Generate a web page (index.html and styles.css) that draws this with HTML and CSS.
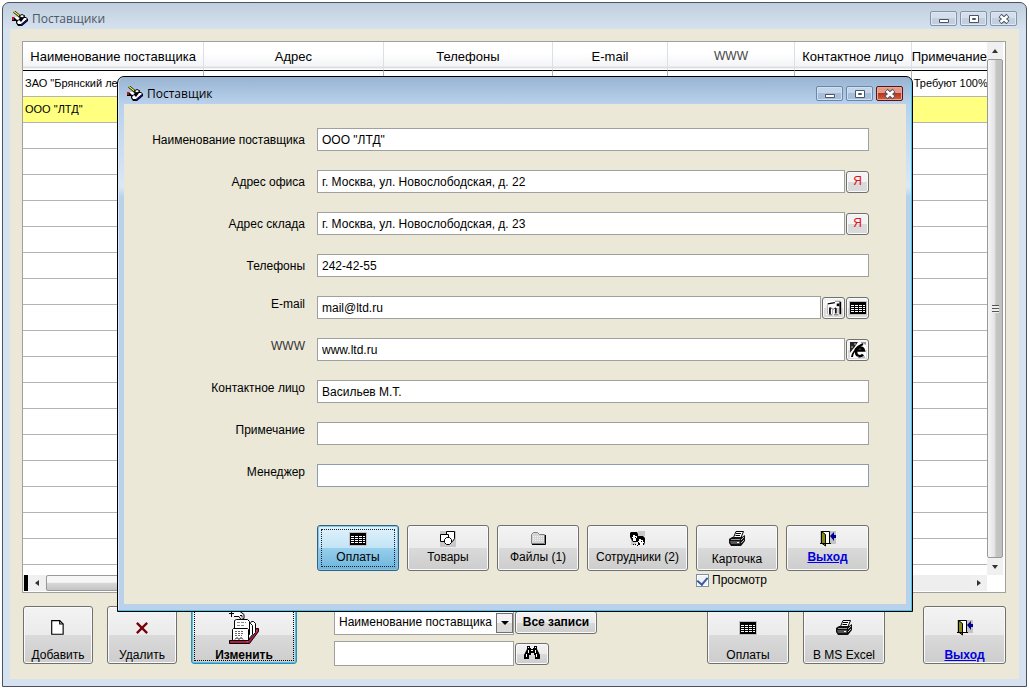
FILE: index.html
```html
<!DOCTYPE html>
<html lang="ru">
<head>
<meta charset="utf-8">
<title>Поставщики</title>
<link rel="stylesheet" href="styles.css">
</head>
<body>
<svg class="sprite" aria-hidden="true">
  <symbol id="i-app" viewBox="0 0 16 16">
    <path d="M0 6h3l3 3 3-3h5l2 2v2l-6 5H6l-2-3v-2H0z" fill="#000"/>
    <path d="M5 11l2-2 2 2 3-4h2l1 1-6 5H6z" fill="#fff"/>
    <path d="M0 6h2v3H0z" fill="#c01020"/>
    <path d="M2 6h4l1 2-2 1z" fill="#fff"/>
    <path d="M2 .500l7 6" stroke="#000" stroke-width="2.500"/>
    <path d="M2 .500l6 5" stroke="#f4ee30" stroke-width="1.300"/>
    <path d="M7 5l3-1.500 3 1.500-3 2z" fill="#fff" stroke="#000"/>
    <path d="M9 14l6-5" stroke="#10108a" stroke-width="1.300"/>
  </symbol>
  <symbol id="i-table" viewBox="0 0 18 14">
    <path d="M0 0h18v14H0z" fill="#c0c0c0"/><path d="M1 1h16v12H1z"/>
    <path d="M2 4h3v1H2zM6 4h3v1H6zM10 4h3v1h-3zM14 4h2v1h-2zM2 6h3v1H2zM6 6h3v1H6zM10 6h3v1h-3zM14 6h2v1h-2zM2 8h3v1H2zM6 8h3v1H6zM10 8h3v1h-3zM14 8h2v1h-2zM2 10h3v1H2zM6 10h3v1H6zM10 10h3v1h-3zM14 10h2v1h-2z" fill="#fff"/>
  </symbol>
  <symbol id="i-shapes" viewBox="0 0 16 16">
    <path d="M0 0h16v16H0z" fill="#c8c8c8"/>
    <path d="M6.500.500h8v7l-2 3h-6z" fill="#fff" stroke="#000"/>
    <path d="M.500 3.500h8v7h-8z" fill="#fff" stroke="#000"/>
    <path d="M6.500 6.500h3l2 2v3l-2 2h-3l-2-2v-3z" fill="#fff" stroke="#000"/>
  </symbol>
  <symbol id="i-folder" viewBox="0 0 16 16">
    <path d="M1.500 12.500v-9l2-2h4l2 2h5v9z" fill="#d4d4d4" stroke="#808080"/>
    <path d="M2 13.500h13.500V4" fill="none" stroke="#000"/>
    <path d="M3 5.500h11M3 7.500h11M3 9.500h11" stroke="#f4f4f4" stroke-dasharray="1 1"/>
  </symbol>
  <symbol id="i-people" viewBox="0 0 16 16">
    <path d="M8 0h7v5h-7zM1 9h5v5H1z" fill="#c8c8c8"/>
    <path d="M1 1h6l1 2v2h5l2 2v4l-1 3H8v-3H3L1 8 0 6V2z" fill="#000"/>
    <path d="M3 4h2v1h2v2H6v3H3V7H2V6h1z" fill="#fff"/>
    <path d="M9 8h2v1h2v2h1v1h-1v2h-3v-2H9v-1H8v-1h1z" fill="#fff"/>
    <path d="M5 6h1v1H5zM11 10h1v1h-1z"/>
    <path d="M3 13h1v1H3zM5 13h1v1H5zM7 14h1v1H7z"/>
  </symbol>
  <symbol id="i-printer" viewBox="0 0 18 16">
    <path d="M5.500 6.500L8 .500h7.500l-2.500 6z" fill="#fff" stroke="#000"/>
    <path d="M8 2.500h5M7.500 4.500h4.500" stroke="#000"/>
    <path d="M1 8l3-2h10l3-2v6l-4 5H3l-2-3z" fill="#111"/>
    <path d="M3 8h9v1H3z" fill="#999"/><path d="M2 10h10v3H3z" fill="#555"/>
    <path d="M13 9l3-3M13 12l3-3" stroke="#bbb"/>
    <path d="M9 11h2v1H9z" fill="#fff"/>
  </symbol>
  <symbol id="i-exit" viewBox="0 0 16 16">
    <path d="M0 0h16v13H0z" fill="#c4c4c4"/>
    <path d="M1.500.500h8v12h-8z" fill="#fff" stroke="#000"/>
    <path d="M1.500.500l4 3v11.500l-4-3z" fill="#8a8a10" stroke="#000"/>
    <path d="M0 12.500h11" stroke="#000"/>
    <path d="M10 5l4-4v3h2v3h-2v3z" fill="#000090"/>
  </symbol>
  <symbol id="i-page" viewBox="0 0 14 14">
    <path d="M1.500.500h7l3 3v9h-10z" fill="#fff" stroke="#000"/><path d="M8.500.500v3h3" fill="none" stroke="#000"/>
  </symbol>
  <symbol id="i-delete" viewBox="0 0 14 14">
    <path d="M2.500 2.500l9 9M11.500 2.500l-9 9" stroke="#7a0008" stroke-width="2"/>
  </symbol>
  <symbol id="i-edit" viewBox="0 0 32 34">
    <path d="M1.500 30.500h18l9-12h2v3l-9 12h-20z" fill="#b81848" stroke="#000"/>
    <path d="M19 32l10-12" stroke="#f05080" fill="none"/>
    <path d="M21.500 14.500l2-3h2l2 2v9l-7 8h-2z" fill="#fff" stroke="#000"/>
    <path d="M18.500 16.500l2-3h2l2 2v9l-4 5h-2z" fill="#fff" stroke="#000"/>
    <path d="M6.500 10.500l2-1h11l2 2v13h-15z" fill="#fff" stroke="#000"/>
    <path d="M9 12.500h9M9 15.500h8" stroke="#888" stroke-dasharray="3 1"/>
    <path d="M4.500 19.500l1-1h14l1 1v11h-16z" fill="#fff" stroke="#000"/>
    <path d="M7 21.500h8M7 23.500h8M7 25.500h7" stroke="#666" stroke-dasharray="2 1"/>
    <path d="M7 29.500l2-2 2 2 2-2 2 2" stroke="#000" fill="none"/>
    <path d="M1 3.500h5M3.500 1v6M5 1.500h7l4 3v4l-3 1-2-3H6" fill="#fff" stroke="#000"/>
    <path d="M12 5.500h2v2" stroke="#000" fill="none"/>
  </symbol>
  <symbol id="i-find" viewBox="0 0 18 14">
    <path d="M4 0h3v2h1v1h2V2h1V0h3v3l3 6v4h-5V9h-1V7H9v0H8v2H6v4H1V9l3-6z"/>
    <path d="M3 8h1v3H3zM5 4h1v3H5zM12 4h1v3h-1zM13 8h1v3h-1zM5 1h1v1H5zM12 1h1v1h-1zM8 4h2v1H8z" fill="#fff"/>
  </symbol>
  <symbol id="i-mail" viewBox="0 0 20 18">
    <path d="M1 1h17v16H1z" fill="#fff"/>
    <path d="M3 4.500l8-1.500" stroke="#000" stroke-width="1.500"/>
    <path d="M11 1.500h6" stroke="#777"/>
    <path d="M17 2v14" stroke="#000" stroke-width="2"/>
    <path d="M13 4h3v3h-3z"/><path d="M2.500 5v11" stroke="#999"/>
    <path d="M5.500 16V8.500M12 15V9" stroke="#111" stroke-width="2"/>
    <path d="M6 8.500l3 2 3-2" stroke="#444" fill="none"/>
    <path d="M8.500 11v5M14.500 9v6" stroke="#999"/>
    <path d="M4 16.500h4M10 16.500h5" stroke="#555"/>
  </symbol>
  <symbol id="i-web" viewBox="0 0 18 18">
    <path d="M1 1h16v16H1z" fill="#fff"/>
    <path d="M1 1h8L5 7l-4 5z" fill="#222"/><path d="M5 2h2v2H5zM2 5h2v2H2z" fill="#777"/>
    <path d="M11 1h6v3l-2-1z" fill="#999"/>
    <path d="M14 13.500c-2 3-7 2-7-3s7-5 8-1H8" stroke="#000" stroke-width="2.500" fill="none"/>
    <path d="M3 16c0-4 4-10 11-13" stroke="#000" stroke-width="2" fill="none"/>
    <path d="M1 14l4-6" stroke="#fff" stroke-width="1.500"/>
    <path d="M8 15l3 2M13 16h3" stroke="#777"/>
  </symbol>
  <symbol id="i-min" viewBox="0 0 12 12"><path d="M1.500 6.500h9v3h-9z" fill="#fff" stroke="#4b5566"/></symbol>
  <symbol id="i-max" viewBox="0 0 12 12"><path d="M1.500 2.500h9v7h-9z" fill="#fff" stroke="#4b5566"/><path d="M4.500 5.500h3v1h-3z" fill="#fff" stroke="#4b5566"/></symbol>
  <symbol id="i-close" viewBox="0 0 12 12"><path d="M2 2.500l8 7M10 2.500l-8 7" stroke="#4b5566" stroke-width="4.500"/><path d="M2.500 3l7 6M9.500 3l-7 6" stroke="#fff" stroke-width="2.500"/></symbol>
</svg>

<main class="window">
  <header class="titlebar">
    <svg class="app-icon"><use href="#i-app"/></svg>
    <h1 class="title">Поставщики</h1>
    <button class="ctl" aria-label="Свернуть"><svg><use href="#i-min"/></svg></button>
    <button class="ctl" aria-label="Развернуть"><svg><use href="#i-max"/></svg></button>
    <button class="ctl" aria-label="Закрыть"><svg><use href="#i-close"/></svg></button>
  </header>
  <div class="client">
    <div class="panel">
      <div class="grid-side">
        <div class="grid-view">
          <table class="grid">
            <colgroup><col class="c-name"><col class="c-addr"><col class="c-phone"><col class="c-mail"><col class="c-www"><col class="c-person"><col class="c-note"></colgroup>
            <thead><tr><th>Наименование поставщика</th><th>Адрес</th><th>Телефоны</th><th>E-mail</th><th class="thin">WWW</th><th>Контактное лицо</th><th>Примечание</th></tr></thead>
            <tbody>
              <tr><td>ЗАО "Брянский лес"</td><td></td><td></td><td></td><td></td><td></td><td>Требуют 100%</td></tr>
              <tr class="current"><td>ООО "ЛТД"</td><td></td><td></td><td></td><td></td><td></td><td></td></tr>
              <tr><td colspan="7"></td></tr><tr><td colspan="7"></td></tr><tr><td colspan="7"></td></tr>
              <tr><td colspan="7"></td></tr><tr><td colspan="7"></td></tr><tr><td colspan="7"></td></tr>
              <tr><td colspan="7"></td></tr><tr><td colspan="7"></td></tr><tr><td colspan="7"></td></tr>
              <tr><td colspan="7"></td></tr><tr><td colspan="7"></td></tr><tr><td colspan="7"></td></tr>
              <tr><td colspan="7"></td></tr><tr><td colspan="7"></td></tr><tr><td colspan="7"></td></tr>
              <tr><td colspan="7"></td></tr><tr><td colspan="7"></td></tr>
            </tbody>
          </table>
        </div>
        <div class="hscroll">
          <span class="split"></span><span class="arrow left"></span><span class="hthumb"></span><span class="arrow right"></span>
        </div>
      </div>
      <div class="vscroll">
        <span class="arrow up"></span><span class="vthumb"><i class="grip"></i></span><span class="arrow down"></span>
      </div>
    </div>

    <div class="toolbar">
      <button class="btn tall w70"><svg class="ico"><use href="#i-page"/></svg>Добавить</button>
      <button class="btn tall w70"><svg class="ico"><use href="#i-delete"/></svg>Удалить</button>
      <button class="btn tall edit"><svg class="ico-big"><use href="#i-edit"/></svg>Изменить</button>
      <div class="search">
        <div class="search-row">
          <div class="combo">
            <select aria-label="Поле поиска"><option>Наименование поставщика</option></select>
            <span class="drop"></span>
          </div>
          <button class="btn all">Все записи</button>
        </div>
        <div class="search-row">
          <input class="find-text" type="text" aria-label="Текст поиска">
          <button class="btn find" aria-label="Найти"><svg class="ico-find"><use href="#i-find"/></svg></button>
        </div>
      </div>
      <button class="btn tall w82 push"><svg class="ico"><use href="#i-table"/></svg>Оплаты</button>
      <button class="btn tall w82"><svg class="ico"><use href="#i-printer"/></svg>В MS Excel</button>
      <button class="btn tall w83 last"><svg class="ico"><use href="#i-exit"/></svg><span class="exit">Выход</span></button>
    </div>
  </div>
</main>

<section class="dialog" role="dialog" aria-labelledby="dlg-title">
  <header class="titlebar">
    <svg class="app-icon"><use href="#i-app"/></svg>
    <h2 class="title" id="dlg-title">Поставщик</h2>
    <button class="ctl" aria-label="Свернуть"><svg><use href="#i-min"/></svg></button>
    <button class="ctl" aria-label="Развернуть"><svg><use href="#i-max"/></svg></button>
    <button class="ctl red" aria-label="Закрыть"><svg><use href="#i-close"/></svg></button>
  </header>
  <form class="form">
    <div class="field"><label for="f1">Наименование поставщика</label><input id="f1" type="text" value='ООО "ЛТД"'></div>
    <div class="field"><label for="f2">Адрес офиса</label><input id="f2" type="text" value="г. Москва, ул. Новослободская, д. 22"><button type="button" class="mini ya">Я</button></div>
    <div class="field"><label for="f3">Адрес склада</label><input id="f3" type="text" value="г. Москва, ул. Новослободская, д. 23"><button type="button" class="mini ya">Я</button></div>
    <div class="field"><label for="f4">Телефоны</label><input id="f4" type="text" value="242-42-55"></div>
    <div class="field raised"><label for="f5">E-mail</label><input id="f5" type="text" value="mail@ltd.ru"><button type="button" class="mini" aria-label="Написать письмо"><svg><use href="#i-mail"/></svg></button><button type="button" class="mini" aria-label="Список адресов"><svg><use href="#i-table"/></svg></button></div>
    <div class="field raised thin"><label for="f6">WWW</label><input id="f6" type="text" value="www.ltd.ru"><button type="button" class="mini" aria-label="Открыть сайт"><svg><use href="#i-web"/></svg></button></div>
    <div class="field raised"><label for="f7">Контактное лицо</label><input id="f7" type="text" value="Васильев М.Т."></div>
    <div class="field raised"><label for="f8">Примечание</label><input id="f8" type="text"></div>
    <div class="field raised"><label for="f9">Менеджер</label><input id="f9" class="active" type="text"></div>
    <div class="actions">
      <button type="button" class="btn w82 blue"><svg class="ico"><use href="#i-table"/></svg>Оплаты</button>
      <button type="button" class="btn w82"><svg class="ico"><use href="#i-shapes"/></svg>Товары</button>
      <button type="button" class="btn w82"><svg class="ico"><use href="#i-folder"/></svg>Файлы (1)</button>
      <button type="button" class="btn wide"><svg class="ico"><use href="#i-people"/></svg>Сотрудники (2)</button>
      <div class="card">
        <button type="button" class="btn w82 low"><svg class="ico"><use href="#i-printer"/></svg>Карточка</button>
        <label class="preview"><input type="checkbox" checked>Просмотр</label>
      </div>
      <button type="button" class="btn w83"><svg class="ico"><use href="#i-exit"/></svg><span class="exit">Выход</span></button>
    </div>
  </form>
</section>
</body>
</html>
```
FILE: styles.css
```css
* { box-sizing: border-box; }
body {
  margin: 0;
  min-height: 100vh;
  display: flex;
  padding: 2px;
  background: #fff;
  color: #000;
  font: 12px/15px "Liberation Sans", Arial, sans-serif;
}
button, input, select { font: inherit; color: inherit; margin: 0; }
.sprite { position: absolute; width: 0; height: 0; }

/* windows */
.window {
  flex: 1;
  display: flex;
  flex-direction: column;
  min-width: 0;
  padding: 0 7px 7px;
  border: 1px solid #4a525c;
  border-radius: 7px 7px 0 0;
  background: linear-gradient(#c0cedd, #d6e2ef 27px);
}
.titlebar {
  display: flex;
  align-items: center;
  gap: 3px;
  height: 26px;
  padding: 5px 2px 0 1px;
}
.app-icon { width: 18px; height: 16px; }
.title {
  flex: 1;
  margin: 0;
  color: #4c5866;
  font: 12px/16px "Open Sans", "Noto Sans", sans-serif;
}
.ctl {
  width: 27px;
  height: 15px;
  padding: 0;
  display: flex;
  align-items: center;
  justify-content: center;
  border: 1px solid #8494a8;
  border-radius: 2px;
  background: linear-gradient(#d4dfeb 50%, #c1cfdf 50%);
  box-shadow: inset 0 0 0 1px #dfe8f2;
}
.ctl svg { width: 12px; height: 12px; flex: none; }
.ctl.red {
  border-color: #5c1410;
  background: linear-gradient(#e49a88 50%, #b83420 50%, #d06040);
  box-shadow: inset 0 0 0 1px #e8a898;
}
.client {
  flex: 1;
  display: flex;
  flex-direction: column;
  padding: 12px 13px 13px 12px;
  background: #ebe8d8;
}

/* supplier list */
.panel {
  flex: 1 1 0;
  display: flex;
  min-height: 0;
  padding-right: 2px;
  border: 1px solid #a0a0a0;
  background: #fff;
}
.grid-side { flex: 1; display: flex; flex-direction: column; min-width: 0; }
.grid-view { flex: 1 1 0; overflow: hidden; }
.grid { width: 100%; table-layout: fixed; border-collapse: separate; border-spacing: 0; }
.c-name { width: 18.8%; }
.c-addr { width: 18.6%; }
.c-phone { width: 17.6%; }
.c-mail { width: 11.9%; }
.c-www { width: 13.2%; }
.c-person { width: 12.1%; }
.c-note { width: 7.8%; }
.grid th {
  height: 29px;
  padding: 0;
  overflow: hidden;
  white-space: nowrap;
  font-weight: 400;
  font-size: 13px;
  border-right: 1px solid #dcdfe3;
  border-bottom: 1px solid #000;
  background: linear-gradient(#fff 40%, #f3f4f6 85%, #d8dade 92%, #fff 96%);
}
.grid th:last-child { border-right: 0; }
.grid .thin { color: #444; font-size: 12px; }
.grid td {
  height: 26px;
  padding: 0 0 0 2px;
  overflow: hidden;
  white-space: nowrap;
  font-size: 11px;
  border-bottom: 1px solid #b4b4b4;
}
.grid td:not(:last-child) { border-right: 1px solid #b4b4b4; }
.current td { background: #ffff80; }

.hscroll { display: flex; height: 16px; padding-left: 1px; margin-bottom: 1px; background: #eee; }
.split { width: 4px; background: #000; }
.hthumb { flex: 1; border: 1px solid #999; border-radius: 2px; background: linear-gradient(#f6f6f6 45%, #d8d8d8 50%, #c4c4c4); margin: 0 620px 0 1px; }
.arrow { display: flex; align-items: center; justify-content: center; width: 17px; height: 16px; background: #f0f0f0; }
.arrow::before { content: ""; border: 3px solid transparent; }
.left::before { border-right: 4px solid #333; border-left-width: 0; }
.right::before { border-left: 4px solid #333; border-right-width: 0; }
.up::before { border-bottom: 4px solid #333; border-top-width: 0; }
.down::before { border-top: 4px solid #333; border-bottom-width: 0; }
.vscroll { display: flex; flex-direction: column; width: 16px; padding-bottom: 17px; }
.vscroll .arrow { width: 16px; height: 17px; }
.vthumb {
  flex: 1;
  display: flex;
  align-items: center;
  justify-content: center;
  border: 1px solid #999;
  border-radius: 2px;
  background: linear-gradient(90deg, #f6f6f6, #e4e4e4 45%, #c4c4c4 60%, #c0c0c0);
}
.grip { width: 7px; height: 8px; background: repeating-linear-gradient(#555 0 1px, #eee 1px 3px); }

/* buttons */
.btn {
  display: flex;
  flex-direction: column;
  align-items: center;
  height: 46px;
  padding: 5px 0 0;
  gap: 3px;
  white-space: nowrap;
  border: 1px solid #707070;
  border-radius: 3px;
  background: linear-gradient(#f3f3f3, #ebebeb 50%, #dadada 50%, #cdcdcd);
  box-shadow: inset 0 0 0 1px #fafafa;
}
.ico { width: 18px; height: 16px; }
.low { gap: 5px; }
.tall { height: 58px; padding-top: 13px; gap: 12px; }
.w70 { width: 70px; }
.w82 { width: 82px; }
.w83 { width: 83px; }
.wide { width: 101px; }
.exit { color: #0000e0; font-weight: 700; text-decoration: underline; }
.blue {
  border-color: #2c628b;
  background: linear-gradient(#e2f3fc, #c2e4f6 50%, #98cfec 50%, #6cb4dc);
  box-shadow: inset 0 0 0 1px #8cc4e0;
  outline: 1px dotted #102030;
  outline-offset: -5px;
}
.edit {
  width: 106px;
  padding-top: 3px;
  gap: 4px;
  font-weight: 700;
  border-color: #2f8cb4;
  box-shadow: inset 0 0 0 1px #50c0e8;
  outline: 1px dotted #000;
  outline-offset: -4px;
}
.ico-big { width: 32px; height: 34px; }

/* lower bar */
.toolbar { display: flex; align-items: flex-start; gap: 14px; margin-top: 13px; padding-left: 1px; }
.search { display: flex; flex-direction: column; gap: 6px; margin: 4px 0 0 23px; }
.search-row { display: flex; align-items: center; gap: 1px; }
.combo { position: relative; width: 180px; }
.combo select {
  appearance: none;
  display: block;
  width: 100%;
  height: 25px;
  padding: 0 17px 0 4px;
  border: 1px solid #a0a0a0;
  border-radius: 0;
  background: #fff;
}
.drop {
  position: absolute;
  top: 3px;
  right: 1px;
  bottom: 2px;
  width: 17px;
  display: flex;
  align-items: center;
  justify-content: center;
  border: 1px solid #707070;
  background: linear-gradient(#f3f3f3 50%, #dadada 50%);
  pointer-events: none;
}
.drop::before { content: ""; border: 4px solid transparent; border-top-color: #000; border-bottom-width: 0; }
.all { width: 82px; height: 23px; font-weight: 700; padding-top: 3px; }
.find-text { width: 180px; height: 25px; padding: 0 4px; border: 1px solid #a0a0a0; }
.find { width: 34px; height: 22px; padding-top: 2px; }
.ico-find { width: 18px; height: 14px; }
.push { margin-left: auto; }
.last { margin-left: 24px; }

/* supplier card */
.dialog {
  position: absolute;
  top: 76px;
  left: 117px;
  right: 116px;
  padding: 0 6px 7px;
  border: 1px solid #000;
  border-radius: 7px 7px 0 0;
  background: linear-gradient(#98b4d2, #b9d1ec 27px, #dbe8f6 110px, #b9d1ea 120px);
  box-shadow: inset -1px -1px 0 #40c8ec, inset 1px 0 0 #d8ecf8;
}
.dialog .titlebar { height: 27px; padding: 6px 3px 0 2px; }
.dialog .title { color: #000; }
.dialog .ctl:not(.red) { border-color: #6c86a6; background: linear-gradient(#c2d5ea 50%, #a4bedb 50%); box-shadow: inset 0 0 0 1px #d0e0f0; }
.form {
  display: flex;
  flex-direction: column;
  gap: 19px;
  padding: 24px 37px 16px 8px;
  background: #ebe8d8;
}
.field { display: flex; align-items: center; gap: 1px; }
.field label { width: 173px; margin-right: 11px; padding-top: 2px; text-align: right; }
.field input { flex: 1; min-width: 0; height: 23px; padding: 0 4px; border: 1px solid #a0a0a0; background: #fff; }
.field .active { border-color: #8c9cb4; }
.raised label { padding-top: 0; padding-bottom: 6px; }
.thin label { color: #333; }
.mini {
  display: flex;
  align-items: center;
  justify-content: center;
  width: 23px;
  height: 22px;
  padding: 0;
  border: 1px solid #707070;
  border-radius: 3px;
  background: linear-gradient(#f3f3f3 50%, #dadada 50%);
  box-shadow: inset 0 0 0 1px #fafafa;
}
.mini svg { width: 18px; height: 18px; flex: none; }
.ya { color: #e01020; }
.actions { display: flex; align-items: flex-start; justify-content: flex-end; gap: 8px; margin-top: 19px; }
.card { width: 82px; }
.preview { display: flex; align-items: center; gap: 3px; margin-top: 2px; }
.preview input {
  appearance: none;
  display: flex;
  justify-content: center;
  flex: none;
  width: 13px;
  height: 13px;
  border: 1px solid #8090a4;
  background: #eef3f8;
  box-shadow: inset 0 0 0 1px #fff;
}
.preview input:checked::before {
  content: "";
  width: 5px;
  height: 8px;
  border: solid #3c58a0;
  border-width: 0 2px 2px 0;
  transform: rotate(40deg);
}
```
